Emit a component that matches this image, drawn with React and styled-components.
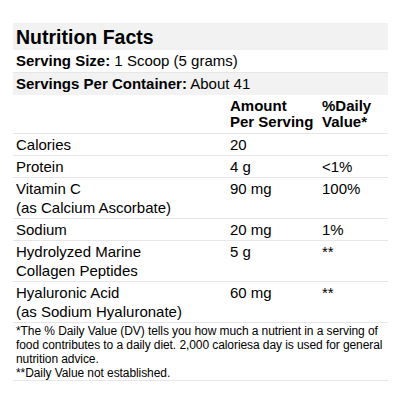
import React from 'react';
import styled, { createGlobalStyle } from 'styled-components';

const GlobalStyle = createGlobalStyle`
	body {
		margin: 0;
		background: #fff;
		font-family: "Liberation Sans", Arial, sans-serif;
		color: #000;
	}
`;

const Label = styled.div`
	width: 375px;
	margin: 23px 0 0 13px;
	font-size: 15px;
	line-height: 19px;
`;

const Title = styled.div`
	background: #f2f2f2;
	height: 27px;
	padding: 0 3px;
	font-size: 19.5px;
	font-weight: bold;
	line-height: 29px;
`;

const InfoRow = styled.div`
	background: ${p => (p.$shaded ? '#f2f2f2' : '#fff')};
	border-top: ${p => (p.$first ? '0' : '1px solid #e6e6e6')};
	padding: 1px 3px 0;
	height: 21px;
	line-height: 20px;
`;

const Row = styled.div`
	display: grid;
	grid-template-columns: 214px 92px 1fr;
	border-top: 1px solid #e6e6e6;
	padding: 1px 0;
`;

const HeadRow = styled(Row)`
	border-top: 0;
	padding: 3px 0 3px;
	font-weight: bold;
	line-height: 16px;
`;

const Cell = styled.div`
	padding: 0 3px;
`;

const Footnote = styled.div`
	border-top: 1px solid #e6e6e6;
	border-bottom: 1px solid #e6e6e6;
	padding: 1px 0 0 3px;
	font-size: 12px;
	line-height: 14px;
	letter-spacing: -0.08px;
`;

const nutrients = [
	{ name: ['Calories'], amount: '20', dv: '' },
	{ name: ['Protein'], amount: '4 g', dv: '<1%' },
	{ name: ['Vitamin C', '(as Calcium Ascorbate)'], amount: '90 mg', dv: '100%' },
	{ name: ['Sodium'], amount: '20 mg', dv: '1%' },
	{ name: ['Hydrolyzed Marine', 'Collagen Peptides'], amount: '5 g', dv: '**' },
	{ name: ['Hyaluronic Acid', '(as Sodium Hyaluronate)'], amount: '60 mg', dv: '**' },
];

const App = () => {
	return (
		<>
			<GlobalStyle />
			<Label>
				<Title>Nutrition Facts</Title>
				<InfoRow $first>
					<b>Serving Size:</b> 1 Scoop (5 grams)
				</InfoRow>
				<InfoRow $shaded>
					<b>Servings Per Container:</b> About 41
				</InfoRow>
				<HeadRow>
					<Cell />
					<Cell>Amount<br />Per Serving</Cell>
					<Cell>%Daily<br />Value*</Cell>
				</HeadRow>
				{nutrients.map(n => (
					<Row key={n.name[0]}>
						<Cell>
							{n.name.map((line, i) => (
								<div key={i}>{line}</div>
							))}
						</Cell>
						<Cell>{n.amount}</Cell>
						<Cell>{n.dv}</Cell>
					</Row>
				))}
				<Footnote>
					*The % Daily Value (DV) tells you how much a nutrient in a serving of food contributes to a daily diet. 2,000 caloriesa day is used for general nutrition advice.
					<br />
					**Daily Value not established.
				</Footnote>
			</Label>
		</>
	);
};

export default App;
